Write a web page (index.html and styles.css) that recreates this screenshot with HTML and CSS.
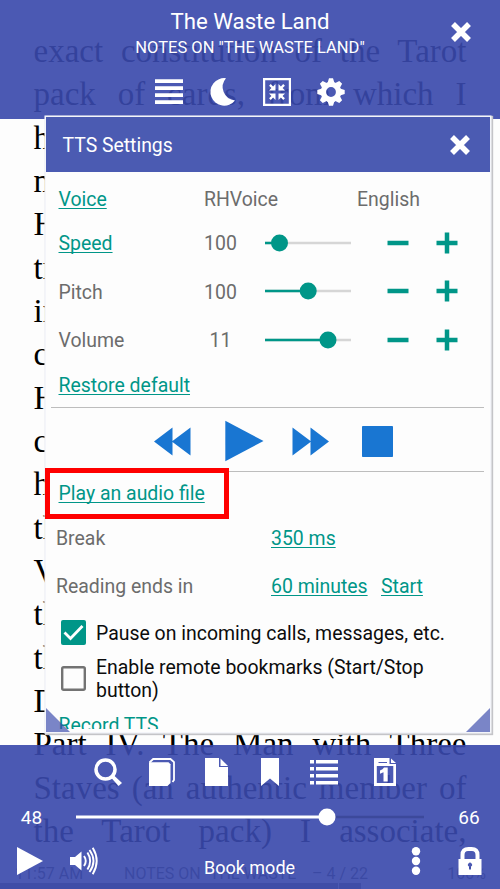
FILE: index.html
```html
<!DOCTYPE html>
<html lang="en">
<head>
<meta charset="utf-8">
<title>The Waste Land</title>
<link rel="stylesheet" href="styles.css">
</head>
<body>
<div class="reader">
  <main class="page">
    <p>exact constitution of the Tarot</p>
    <p>pack of cards, from which I</p>
    <p>have obviously departed to suit</p>
    <p>my own convenience. The</p>
    <p>Hanged Man, a member of the</p>
    <p>traditional pack, fits my purpose</p>
    <p>in two ways: because he is asso-</p>
    <p>ciated in my mind with the</p>
    <p>Hanged God of Frazer, and be-</p>
    <p>cause I associate him with the</p>
    <p>hooded figure in the passage of</p>
    <p>the disciples to Emmaus in Part</p>
    <p>V. The Phoenician Sailor and</p>
    <p>the Merchant appear later; also</p>
    <p>the "crowds of people," and</p>
    <p>Death by Water is executed in</p>
    <p>Part IV. The Man with Three</p>
    <p>Staves (an authentic member of</p>
    <p>the Tarot pack) I associate,</p>
  </main>
  <div class="status">
    <span class="status-time">11:57 AM</span>
    <span class="status-chapter">NOTES ON "THE WASTE</span>
    <span class="status-pages">– 4 / 22</span>
    <span class="status-percent">100%</span>
  </div>
  <div class="progress"><span></span><span></span></div>

  <header class="topbar">
    <h1>The Waste Land</h1>
    <h2>NOTES ON "THE WASTE LAND"</h2>
    <div class="tools">
      <svg viewBox="0 0 28 28"><path d="M0 1.300h28v3.700H0zM0 8.300h28v3.700H0zM0 15.300h28v3.700H0zM0 22.300h28v3.700H0z"/></svg>
      <svg viewBox="0 0 28 28"><path d="M17 .2A13.800 13.800 0 1 0 26 22.500A13.500 13.500 0 0 1 17 .2Z"/></svg>
      <svg viewBox="0 0 28 28"><path d="M0 0h28v28H0zM2.200 2.200v23.600h23.600V2.200z" fill-rule="evenodd"/><path d="M12.500 6v6.500H6l2.400-2.400-2.300-2.300 1.700-1.700 2.300 2.300zM15.500 6v6.500H22l-2.400-2.400 2.300-2.300-1.700-1.700-2.300 2.300zM12.500 22v-6.500H6l2.400 2.400-2.300 2.300 1.700 1.700 2.300-2.300zM15.500 22v-6.500H22l-2.400 2.400 2.300 2.300-1.700 1.700-2.300-2.300z"/></svg>
      <svg viewBox="0 0 28 28"><g id="tooth"><path d="M10.500 5L12 .3h4L17.500 5zM10.500 23l1.500 4.700h4l1.500-4.700z"/></g><use href="#tooth" transform="rotate(45 14 14)"/><use href="#tooth" transform="rotate(90 14 14)"/><use href="#tooth" transform="rotate(135 14 14)"/><circle class="ring" cx="14" cy="14" r="7.600"/></svg>
    </div>
    <svg class="close top-close" viewBox="0 0 22 22"><path d="M3 3l16 16M19 3L3 19"/></svg>
  </header>

  <section class="dialog">
    <div class="dialog-head">
      <span>TTS Settings</span>
      <svg class="close" viewBox="0 0 22 22"><path d="M3 3l16 16M19 3L3 19"/></svg>
    </div>
    <div class="dialog-body">
      <div class="row voice"><a>Voice</a><span>RHVoice</span><span>English</span></div>
      <div class="row setting"><a>Speed</a><span class="value">100</span>
        <svg class="slider" viewBox="0 0 86 18"><path class="rest" d="M0 9h86"/><path class="fill" d="M0 9h14"/><circle cx="14.500" cy="9" r="8.500"/></svg>
        <svg class="step" viewBox="0 0 22 22"><path d="M.5 11h21"/></svg><svg class="step" viewBox="0 0 22 22"><path d="M.5 11h21M11 .500v21"/></svg></div>
      <div class="row setting"><span>Pitch</span><span class="value">100</span>
        <svg class="slider" viewBox="0 0 86 18"><path class="rest" d="M0 9h86"/><path class="fill" d="M0 9h43"/><circle cx="43.200" cy="9" r="8.500"/></svg>
        <svg class="step" viewBox="0 0 22 22"><path d="M.5 11h21"/></svg><svg class="step" viewBox="0 0 22 22"><path d="M.5 11h21M11 .500v21"/></svg></div>
      <div class="row setting"><span>Volume</span><span class="value">11</span>
        <svg class="slider" viewBox="0 0 86 18"><path class="rest" d="M0 9h86"/><path class="fill" d="M0 9h63"/><circle cx="63" cy="9" r="8.500"/></svg>
        <svg class="step" viewBox="0 0 22 22"><path d="M.5 11h21"/></svg><svg class="step" viewBox="0 0 22 22"><path d="M.5 11h21M11 .500v21"/></svg></div>
      <div class="row restore"><a>Restore default</a></div>
      <div class="transport">
        <svg width="37" height="29" viewBox="0 0 37 29"><path d="M0 14.500L18.500 .5v13.500L36.500 .5v28L18.500 15v13.500z"/></svg>
        <svg width="39" height="42" viewBox="0 0 39 42"><path d="M.3 .800L38.500 21 .3 41.200z"/></svg>
        <svg width="37" height="29" viewBox="0 0 37 29"><path d="M37 14.500L18.500 .5v13.500L.5 .5v28L18.500 15v13.500z"/></svg>
        <svg width="31" height="31" viewBox="0 0 31 31"><rect width="31" height="31" rx=".8"/></svg>
      </div>
      <div class="row play-file"><a>Play an audio file</a></div>
      <div class="row timing break"><span>Break</span><a>350 ms</a></div>
      <div class="row timing ends"><span>Reading ends in</span><a>60 minutes</a><a>Start</a></div>
      <div class="row check pause">
        <svg class="box" viewBox="0 0 25 25"><rect class="on" width="25" height="25" rx="2"/><path class="tick" d="M3.500 12.500l6 6L21.500 6"/></svg>
        <span>Pause on incoming calls, messages, etc.</span></div>
      <div class="row check remote">
        <svg class="box" viewBox="0 0 25 25"><rect class="off" x="1.200" y="1.200" width="22.600" height="22.600" rx="1.500"/></svg>
        <span>Enable remote bookmarks (Start/Stop<br>button)</span></div>
      <div class="row record"><a>Record TTS</a></div>
    </div>
    <i class="grip grip-left"></i><i class="grip grip-right"></i>
  </section>
  <div class="highlight"></div>

  <footer class="bottombar">
    <div class="tools">
      <svg viewBox="0 0 28 28"><circle class="lens" cx="11.500" cy="11.500" r="9.500"/><path d="M17 19.500l2.500-2.500L28 25l-3.500 3z"/></svg>
      <svg viewBox="0 0 28 28"><path d="M1 4.300h19.500l2 2V25l-3 3H1z"/><path class="back-page" d="M1.500 4.500L5.200 1H22.500l3.500 3.200V22l-1.500 2"/></svg>
      <svg viewBox="0 0 28 28"><path d="M3 0h14v9h9v19H3zM18.500 .5L26 8h-7.500z"/></svg>
      <svg viewBox="0 0 28 28"><path d="M5 0h18v28l-9-7.500L5 28z"/></svg>
      <svg viewBox="0 0 28 28"><path d="M0 2h4v3.500H0zM6 2h22v3.500H6zM0 9h4v3.500H0zM6 9h22v3.500H6zM0 16h4v3.500H0zM6 16h22v3.500H6zM0 23h4v3.500H0zM6 23h22v3.500H6z"/></svg>
      <svg class="page-icon" viewBox="0 0 28 28"><path d="M3 0h15.500v6H25v22H3zM7.500 4v1h8.500V4zM5.800 8v17h16.500V8z" fill-rule="evenodd"/><path d="M20 .5L25 5h-5zM13 9.500h3.700v14h-4.200v-9.200L9 15.800v-3.300q3-.8 4-3z"/></svg>
    </div>
    <div class="seek">
      <span>48</span>
      <svg viewBox="0 0 348 18"><path class="seek-rest" d="M250 9h98"/><path class="seek-fill" d="M0 9h250"/><circle cx="251" cy="9" r="8.500"/></svg>
      <span>66</span>
    </div>
    <div class="actions">
      <svg viewBox="0 0 28 28"><path d="M1 0l26 14L1 28z"/></svg>
      <svg viewBox="0 0 28 28"><path d="M0 10h5l6.500-5.500v19L5 18H0z"/><path class="wave" d="M14 9q3.500 5 0 10M17.400 5.500q5.500 8.500 0 17M19.500 3q8 11 0 22M22.700 .8q8 13.200 0 26.400"/></svg>
      <span class="mode">Book mode</span>
      <svg class="dots" viewBox="0 0 28 28"><circle cx="14" cy="4.300" r="4.200"/><circle cx="14" cy="14" r="4.200"/><circle cx="14" cy="23.800" r="4.200"/></svg>
      <svg class="lock" viewBox="0 0 28 28"><path d="M2.500 12h2V8q0-8 8-8h3q8 0 8 8v4h2v16h-23zM8.500 12h11V8q0-4-3.500-4h-4q-3.500 0-3.500 4zM13 22.500h2v-3a2 2 0 1 0-2 0z" fill-rule="evenodd"/></svg>
    </div>
  </footer>
</div>
</body>
</html>
```
FILE: styles.css
```css
* { box-sizing: border-box; }
body { margin: 0; font-family: Roboto, "Liberation Sans", sans-serif; }
svg { display: block; flex: none; overflow: visible; }
.reader { position: relative; width: 500px; height: 889px; overflow: hidden; background: #fdfdfd; }

.page { padding: 30px 33.500px 0; font: 33px/43.330px "Liberation Serif", serif; color: #000; }
.page p { margin: 0; height: 43.330px; white-space: nowrap; text-align: justify; text-align-last: justify; }
.status { position: absolute; left: 15px; right: 14px; bottom: 5px; display: flex; font-size: 16px; line-height: 20px; color: #555; white-space: nowrap; }
.status-time { width: 109px; }
.status-chapter { width: 188px; }
.status-percent { margin-left: auto; }
.progress { position: absolute; left: 0; bottom: 0; display: flex; gap: 1px; width: 361px; height: 6px; }
.progress span { background: #777; width: 338px; }
.progress span + span { width: 22px; }

.topbar { position: absolute; inset: 0 0 auto; height: 119px; padding-top: 8px; background: rgba(57, 73, 171, .91); color: #fff; text-align: center; }
.topbar h1 { margin: 0; font-size: 22.200px; line-height: 27px; font-weight: 400; }
.topbar h2 { margin: 1px 0 0; font-size: 16.500px; line-height: 24px; font-weight: 400; }
.tools { display: flex; gap: 26px; fill: #fff; }
.tools svg { width: 28px; height: 28px; }
.topbar .tools { padding: 18px 0 0 155px; }
.ring { fill: none; stroke: #fff; stroke-width: 5.400px; }
.close { width: 22px; height: 22px; fill: none; stroke: #fff; stroke-width: 5.500px; }
.top-close { position: absolute; left: 450px; top: 21px; }

.dialog { position: absolute; left: 46px; top: 117px; width: 444px; height: 615px; background: #fdfdfd; box-shadow: 0 0 0 1.500px #f4f5fa, 1px 1px 1px 2px #c4c4c8; }
.dialog-head { display: flex; align-items: center; justify-content: space-between; height: 55px; padding: 0 19px 0 16.500px; background: #4b5bb2; color: #fff; font-size: 19.400px; }
.dialog-head span { padding-top: 2px; }
.dialog-body { height: 557px; padding-top: 7px; overflow: hidden; color: #6c6c6c; font-size: 19.450px; line-height: 23px; }
.row { display: flex; align-items: center; padding-left: 12.500px; white-space: nowrap; }
.row a { color: #009688; text-decoration: underline 1px; text-underline-offset: 2px; text-decoration-skip-ink: none; }
.voice { display: grid; grid-template-columns: 145.500px 153px auto; justify-items: start; height: 40px; }
.setting { display: grid; grid-template-columns: 141.500px 41px 24px 122px 48.500px 22px; justify-items: start; height: 48.700px; }
.value { justify-self: center; }
.slider { grid-column: 4; width: 86px; height: 18px; fill: #009688; margin-top: -1.500px; }
.slider .rest { stroke: #d6d6d6; stroke-width: 2.500px; }
.slider .fill { stroke: #009688; stroke-width: 2.500px; }
.step { width: 22px; height: 22px; stroke: #009688; stroke-width: 4.500px; margin-top: -1.500px; }
.restore { height: 41px; }
.transport { display: flex; align-items: center; height: 65px; margin: .9px 6px 0 5px; padding: 4px 0 0 103px; border: solid #bdbdbd; border-width: 1px 0; fill: #1976d2; }
.transport svg + svg { margin-left: 34px; }
.transport svg:nth-child(3) { margin-left: 28px; }
.transport svg:nth-child(4) { margin-left: 32.500px; }
.play-file { height: 42.500px; }
.timing { display: grid; grid-template-columns: 215px 110px auto; justify-items: start; padding-left: 10px; }
.break { height: 47.500px; }
.ends { height: 50px; }
.check { gap: 10px; padding-left: 15px; color: #0c0c0c; }
.box { width: 25px; height: 25px; margin-top: -2px; }
.on { fill: #009688; }
.tick { fill: none; stroke: #fff; stroke-width: 2.800px; }
.off { fill: none; stroke: #737373; stroke-width: 2.400px; }
.pause { height: 43px; }
.remote { height: 50px; line-height: 22.700px; }
.record { height: 41.500px; }
.grip { position: absolute; bottom: 0; width: 24px; height: 24px; background: rgba(57, 73, 171, .67); }
.grip-left { left: 0; clip-path: polygon(0 0, 100% 100%, 0 100%); }
.grip-right { right: 0; clip-path: polygon(100% 0, 100% 100%, 0 100%); }
.highlight { position: absolute; left: 44.500px; top: 468px; width: 184.500px; height: 51px; border: 5px solid #f00; }

.bottombar { position: absolute; inset: auto 0 0; height: 144px; padding-top: 13px; background: rgba(57, 73, 171, .91); color: #fff; fill: #fff; }
.bottombar .tools { padding-left: 94px; }
.lens { fill: none; stroke: #fff; stroke-width: 3.500px; }
.back-page { fill: none; stroke: #fff; stroke-width: 1.800px; }
.bottombar .page-icon { margin-left: 7px; }
.seek { display: grid; grid-template-columns: 62px 348px 90px; align-items: center; height: 24px; margin-top: 19px; font-size: 19px; text-align: center; }
.seek svg { width: 348px; height: 18px; margin-top: -1px; margin-left: 14px; }
.seek span:first-child { padding-left: 1px; }
.seek span:last-child { padding-left: 28px; }
.seek-rest { stroke: #3c499b; stroke-width: 2.500px; }
.seek-fill { stroke: #fff; stroke-width: 3px; }
.actions { display: flex; padding: 18px 0 0 16px; }
.actions svg { width: 28px; height: 28px; }
.actions svg + svg { margin-left: 26px; }
.wave { fill: none; stroke: #fff; stroke-width: 1.900px; }
.mode { width: 92px; margin: 7px 0 0 106px; font-size: 18px; line-height: 28px; white-space: nowrap; }
.actions .dots { margin-left: 106px; }
```
